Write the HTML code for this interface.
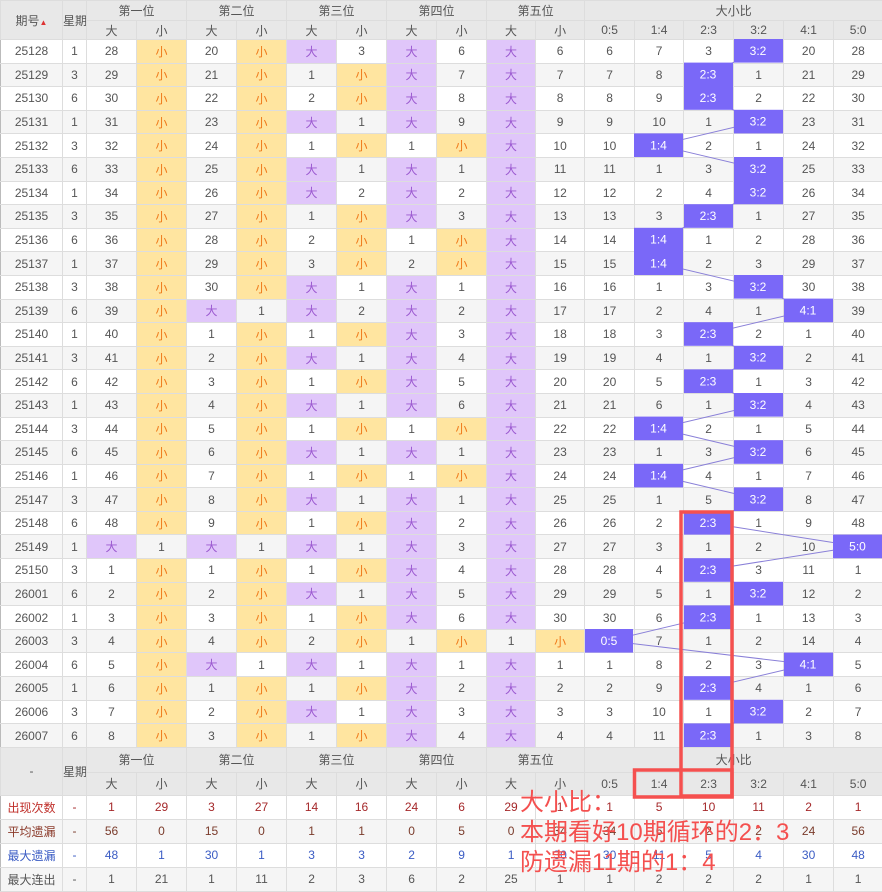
<!DOCTYPE html>
<html><head><meta charset="utf-8"><style>
body{margin:0;width:882px;height:891px;overflow:hidden;background:#fff;font-family:"Liberation Sans","Noto Sans CJK SC",sans-serif;}
.wrap{position:relative;width:882px;height:891px;}
table{border-collapse:collapse;table-layout:fixed;width:882px;font-size:12px;color:#555;position:absolute;left:0;top:0;}
td,th{border:1px solid #ddd;text-align:center;padding:0;white-space:nowrap;overflow:hidden;font-weight:normal;}
th{background:#e8e8e8;color:#555;}
tr.d{height:23.6px;}
tr.d:nth-child(even) td{background:#f5f5f5;}
tr.d td:nth-child(1),tr.d td:nth-child(2),tr.d td:nth-child(3),tr.d td:nth-child(5),tr.d td:nth-child(7),tr.d td:nth-child(9),tr.d td:nth-child(11),tr.d td:nth-child(13){border-left:1px solid #bbb;}
tr.g td{border-top:1px solid #aaa;}
tr.d td.y{background:#ffe5a0 !important;color:#f07a1a;}
tr.d td.p{background:#e0c6fa !important;color:#9b59d0;}
tr.h1{height:20px;} tr.h2{height:19px;}
tr.f1{height:25px;} tr.f2{height:23px;}
tr.s{height:24px;}
tr.s:nth-child(even) td{background:#f5f5f5;}
tr.s td:nth-child(1),tr.s td:nth-child(2),tr.s td:nth-child(3),tr.s td:nth-child(5),tr.s td:nth-child(7),tr.s td:nth-child(9),tr.s td:nth-child(11),tr.s td:nth-child(13){border-left:1px solid #bbb;}
.r1 td{color:#a5282a;} .r2 td{color:#7a3b2b;} .r3 td{color:#3b5cc4;} .r4 td{color:#555;}
.r1 td:first-child{color:#c0302b;} .r2 td:first-child{color:#8b3a2a;}
.note{position:absolute;left:520px;top:788px;color:#f4504f;font-size:24px;line-height:30px;font-family:"Liberation Sans","Noto Sans CJK SC",sans-serif;}
svg{position:absolute;left:0;top:0;}
.up{font-size:8px;color:#d33;}
</style></head><body><div class="wrap">
<table>
<colgroup><col style="width:62px"><col style="width:24px">
<col style="width:50px"><col style="width:50px"><col style="width:50px"><col style="width:50px"><col style="width:50px"><col style="width:50px"><col style="width:50px"><col style="width:50px"><col style="width:49px"><col style="width:49px">
<col style="width:50px"><col style="width:49px"><col style="width:50px"><col style="width:50px"><col style="width:50px"><col style="width:49px"></colgroup>
<tr class="h1"><th rowspan="2">期号<span class="up">▲</span></th><th rowspan="2">星期</th><th colspan="2">第一位</th><th colspan="2">第二位</th><th colspan="2">第三位</th><th colspan="2">第四位</th><th colspan="2">第五位</th><th colspan="6">大小比</th></tr>
<tr class="h2"><th>大</th><th>小</th><th>大</th><th>小</th><th>大</th><th>小</th><th>大</th><th>小</th><th>大</th><th>小</th><th>0:5</th><th>1:4</th><th>2:3</th><th>3:2</th><th>4:1</th><th>5:0</th></tr>
<tr class="d"><td>25128</td><td>1</td><td>28</td><td class="y">小</td><td>20</td><td class="y">小</td><td class="p">大</td><td>3</td><td class="p">大</td><td>6</td><td class="p">大</td><td>6</td><td>6</td><td>7</td><td>3</td><td>3:2</td><td>20</td><td>28</td></tr>
<tr class="d"><td>25129</td><td>3</td><td>29</td><td class="y">小</td><td>21</td><td class="y">小</td><td>1</td><td class="y">小</td><td class="p">大</td><td>7</td><td class="p">大</td><td>7</td><td>7</td><td>8</td><td>2:3</td><td>1</td><td>21</td><td>29</td></tr>
<tr class="d"><td>25130</td><td>6</td><td>30</td><td class="y">小</td><td>22</td><td class="y">小</td><td>2</td><td class="y">小</td><td class="p">大</td><td>8</td><td class="p">大</td><td>8</td><td>8</td><td>9</td><td>2:3</td><td>2</td><td>22</td><td>30</td></tr>
<tr class="d"><td>25131</td><td>1</td><td>31</td><td class="y">小</td><td>23</td><td class="y">小</td><td class="p">大</td><td>1</td><td class="p">大</td><td>9</td><td class="p">大</td><td>9</td><td>9</td><td>10</td><td>1</td><td>3:2</td><td>23</td><td>31</td></tr>
<tr class="d"><td>25132</td><td>3</td><td>32</td><td class="y">小</td><td>24</td><td class="y">小</td><td>1</td><td class="y">小</td><td>1</td><td class="y">小</td><td class="p">大</td><td>10</td><td>10</td><td>1:4</td><td>2</td><td>1</td><td>24</td><td>32</td></tr>
<tr class="d g"><td>25133</td><td>6</td><td>33</td><td class="y">小</td><td>25</td><td class="y">小</td><td class="p">大</td><td>1</td><td class="p">大</td><td>1</td><td class="p">大</td><td>11</td><td>11</td><td>1</td><td>3</td><td>3:2</td><td>25</td><td>33</td></tr>
<tr class="d"><td>25134</td><td>1</td><td>34</td><td class="y">小</td><td>26</td><td class="y">小</td><td class="p">大</td><td>2</td><td class="p">大</td><td>2</td><td class="p">大</td><td>12</td><td>12</td><td>2</td><td>4</td><td>3:2</td><td>26</td><td>34</td></tr>
<tr class="d"><td>25135</td><td>3</td><td>35</td><td class="y">小</td><td>27</td><td class="y">小</td><td>1</td><td class="y">小</td><td class="p">大</td><td>3</td><td class="p">大</td><td>13</td><td>13</td><td>3</td><td>2:3</td><td>1</td><td>27</td><td>35</td></tr>
<tr class="d"><td>25136</td><td>6</td><td>36</td><td class="y">小</td><td>28</td><td class="y">小</td><td>2</td><td class="y">小</td><td>1</td><td class="y">小</td><td class="p">大</td><td>14</td><td>14</td><td>1:4</td><td>1</td><td>2</td><td>28</td><td>36</td></tr>
<tr class="d"><td>25137</td><td>1</td><td>37</td><td class="y">小</td><td>29</td><td class="y">小</td><td>3</td><td class="y">小</td><td>2</td><td class="y">小</td><td class="p">大</td><td>15</td><td>15</td><td>1:4</td><td>2</td><td>3</td><td>29</td><td>37</td></tr>
<tr class="d g"><td>25138</td><td>3</td><td>38</td><td class="y">小</td><td>30</td><td class="y">小</td><td class="p">大</td><td>1</td><td class="p">大</td><td>1</td><td class="p">大</td><td>16</td><td>16</td><td>1</td><td>3</td><td>3:2</td><td>30</td><td>38</td></tr>
<tr class="d"><td>25139</td><td>6</td><td>39</td><td class="y">小</td><td class="p">大</td><td>1</td><td class="p">大</td><td>2</td><td class="p">大</td><td>2</td><td class="p">大</td><td>17</td><td>17</td><td>2</td><td>4</td><td>1</td><td>4:1</td><td>39</td></tr>
<tr class="d"><td>25140</td><td>1</td><td>40</td><td class="y">小</td><td>1</td><td class="y">小</td><td>1</td><td class="y">小</td><td class="p">大</td><td>3</td><td class="p">大</td><td>18</td><td>18</td><td>3</td><td>2:3</td><td>2</td><td>1</td><td>40</td></tr>
<tr class="d"><td>25141</td><td>3</td><td>41</td><td class="y">小</td><td>2</td><td class="y">小</td><td class="p">大</td><td>1</td><td class="p">大</td><td>4</td><td class="p">大</td><td>19</td><td>19</td><td>4</td><td>1</td><td>3:2</td><td>2</td><td>41</td></tr>
<tr class="d"><td>25142</td><td>6</td><td>42</td><td class="y">小</td><td>3</td><td class="y">小</td><td>1</td><td class="y">小</td><td class="p">大</td><td>5</td><td class="p">大</td><td>20</td><td>20</td><td>5</td><td>2:3</td><td>1</td><td>3</td><td>42</td></tr>
<tr class="d g"><td>25143</td><td>1</td><td>43</td><td class="y">小</td><td>4</td><td class="y">小</td><td class="p">大</td><td>1</td><td class="p">大</td><td>6</td><td class="p">大</td><td>21</td><td>21</td><td>6</td><td>1</td><td>3:2</td><td>4</td><td>43</td></tr>
<tr class="d"><td>25144</td><td>3</td><td>44</td><td class="y">小</td><td>5</td><td class="y">小</td><td>1</td><td class="y">小</td><td>1</td><td class="y">小</td><td class="p">大</td><td>22</td><td>22</td><td>1:4</td><td>2</td><td>1</td><td>5</td><td>44</td></tr>
<tr class="d"><td>25145</td><td>6</td><td>45</td><td class="y">小</td><td>6</td><td class="y">小</td><td class="p">大</td><td>1</td><td class="p">大</td><td>1</td><td class="p">大</td><td>23</td><td>23</td><td>1</td><td>3</td><td>3:2</td><td>6</td><td>45</td></tr>
<tr class="d"><td>25146</td><td>1</td><td>46</td><td class="y">小</td><td>7</td><td class="y">小</td><td>1</td><td class="y">小</td><td>1</td><td class="y">小</td><td class="p">大</td><td>24</td><td>24</td><td>1:4</td><td>4</td><td>1</td><td>7</td><td>46</td></tr>
<tr class="d"><td>25147</td><td>3</td><td>47</td><td class="y">小</td><td>8</td><td class="y">小</td><td class="p">大</td><td>1</td><td class="p">大</td><td>1</td><td class="p">大</td><td>25</td><td>25</td><td>1</td><td>5</td><td>3:2</td><td>8</td><td>47</td></tr>
<tr class="d g"><td>25148</td><td>6</td><td>48</td><td class="y">小</td><td>9</td><td class="y">小</td><td>1</td><td class="y">小</td><td class="p">大</td><td>2</td><td class="p">大</td><td>26</td><td>26</td><td>2</td><td>2:3</td><td>1</td><td>9</td><td>48</td></tr>
<tr class="d"><td>25149</td><td>1</td><td class="p">大</td><td>1</td><td class="p">大</td><td>1</td><td class="p">大</td><td>1</td><td class="p">大</td><td>3</td><td class="p">大</td><td>27</td><td>27</td><td>3</td><td>1</td><td>2</td><td>10</td><td>5:0</td></tr>
<tr class="d"><td>25150</td><td>3</td><td>1</td><td class="y">小</td><td>1</td><td class="y">小</td><td>1</td><td class="y">小</td><td class="p">大</td><td>4</td><td class="p">大</td><td>28</td><td>28</td><td>4</td><td>2:3</td><td>3</td><td>11</td><td>1</td></tr>
<tr class="d"><td>26001</td><td>6</td><td>2</td><td class="y">小</td><td>2</td><td class="y">小</td><td class="p">大</td><td>1</td><td class="p">大</td><td>5</td><td class="p">大</td><td>29</td><td>29</td><td>5</td><td>1</td><td>3:2</td><td>12</td><td>2</td></tr>
<tr class="d"><td>26002</td><td>1</td><td>3</td><td class="y">小</td><td>3</td><td class="y">小</td><td>1</td><td class="y">小</td><td class="p">大</td><td>6</td><td class="p">大</td><td>30</td><td>30</td><td>6</td><td>2:3</td><td>1</td><td>13</td><td>3</td></tr>
<tr class="d g"><td>26003</td><td>3</td><td>4</td><td class="y">小</td><td>4</td><td class="y">小</td><td>2</td><td class="y">小</td><td>1</td><td class="y">小</td><td>1</td><td class="y">小</td><td>0:5</td><td>7</td><td>1</td><td>2</td><td>14</td><td>4</td></tr>
<tr class="d"><td>26004</td><td>6</td><td>5</td><td class="y">小</td><td class="p">大</td><td>1</td><td class="p">大</td><td>1</td><td class="p">大</td><td>1</td><td class="p">大</td><td>1</td><td>1</td><td>8</td><td>2</td><td>3</td><td>4:1</td><td>5</td></tr>
<tr class="d"><td>26005</td><td>1</td><td>6</td><td class="y">小</td><td>1</td><td class="y">小</td><td>1</td><td class="y">小</td><td class="p">大</td><td>2</td><td class="p">大</td><td>2</td><td>2</td><td>9</td><td>2:3</td><td>4</td><td>1</td><td>6</td></tr>
<tr class="d"><td>26006</td><td>3</td><td>7</td><td class="y">小</td><td>2</td><td class="y">小</td><td class="p">大</td><td>1</td><td class="p">大</td><td>3</td><td class="p">大</td><td>3</td><td>3</td><td>10</td><td>1</td><td>3:2</td><td>2</td><td>7</td></tr>
<tr class="d"><td>26007</td><td>6</td><td>8</td><td class="y">小</td><td>3</td><td class="y">小</td><td>1</td><td class="y">小</td><td class="p">大</td><td>4</td><td class="p">大</td><td>4</td><td>4</td><td>11</td><td>2:3</td><td>1</td><td>3</td><td>8</td></tr>
<tr class="f1"><th rowspan="2">-</th><th rowspan="2">星期</th><th colspan="2">第一位</th><th colspan="2">第二位</th><th colspan="2">第三位</th><th colspan="2">第四位</th><th colspan="2">第五位</th><th colspan="6">大小比</th></tr>
<tr class="f2"><th>大</th><th>小</th><th>大</th><th>小</th><th>大</th><th>小</th><th>大</th><th>小</th><th>大</th><th>小</th><th>0:5</th><th>1:4</th><th>2:3</th><th>3:2</th><th>4:1</th><th>5:0</th></tr>
<tr class="s r1"><td>出现次数</td><td>-</td><td>1</td><td>29</td><td>3</td><td>27</td><td>14</td><td>16</td><td>24</td><td>6</td><td>29</td><td>1</td><td>1</td><td>5</td><td>10</td><td>11</td><td>2</td><td>1</td></tr>
<tr class="s r2"><td>平均遗漏</td><td>-</td><td>56</td><td>0</td><td>15</td><td>0</td><td>1</td><td>1</td><td>0</td><td>5</td><td>0</td><td>34</td><td>34</td><td>6</td><td>2</td><td>2</td><td>24</td><td>56</td></tr>
<tr class="s r3"><td>最大遗漏</td><td>-</td><td>48</td><td>1</td><td>30</td><td>1</td><td>3</td><td>3</td><td>2</td><td>9</td><td>1</td><td>30</td><td>30</td><td>11</td><td>5</td><td>4</td><td>30</td><td>48</td></tr>
<tr class="s r4"><td>最大连出</td><td>-</td><td>1</td><td>21</td><td>1</td><td>11</td><td>2</td><td>3</td><td>6</td><td>2</td><td>25</td><td>1</td><td>1</td><td>2</td><td>2</td><td>2</td><td>1</td><td>1</td></tr>
</table>
<svg width="882" height="891" viewBox="0 0 882 891" font-family="Liberation Sans, sans-serif" font-size="12">
<polyline fill="none" stroke="#8a80d8" stroke-width="1" points="758,50.8 708,74.4 708,98 758,121.6 658.5,145.2 758,168.8 758,192.4 708,216 658.5,239.6 658.5,263.2 758,286.8 808,310.4 708,334 758,357.6 708,381.2 758,404.8 658.5,428.4 758,452 658.5,475.6 758,499.2 708,522.8 857.5,546.4 708,570 758,593.6 708,617.2 609,640.8 808,664.4 708,688 758,711.6 708,735.2"/>
<g fill="#7a68f8">
<rect x="734" y="39" width="49" height="23.6"/><rect x="684" y="62.6" width="49" height="47.2"/>
<rect x="734" y="109.8" width="49" height="23.6"/><rect x="634" y="133.4" width="49" height="23.6"/>
<rect x="734" y="157" width="49" height="47.2"/><rect x="684" y="204.2" width="49" height="23.6"/>
<rect x="634" y="227.8" width="49" height="47.2"/><rect x="734" y="275" width="49" height="23.6"/>
<rect x="784" y="298.6" width="49" height="23.6"/><rect x="684" y="322.2" width="49" height="23.6"/>
<rect x="734" y="345.8" width="49" height="23.6"/><rect x="684" y="369.4" width="49" height="23.6"/>
<rect x="734" y="393" width="49" height="23.6"/><rect x="634" y="416.6" width="49" height="23.6"/>
<rect x="734" y="440.2" width="49" height="23.6"/><rect x="634" y="463.8" width="49" height="23.6"/>
<rect x="734" y="487.4" width="49" height="23.6"/><rect x="684" y="511" width="49" height="23.6"/>
<rect x="833" y="534.6" width="49" height="23.6"/><rect x="684" y="558.2" width="49" height="23.6"/>
<rect x="734" y="581.8" width="49" height="23.6"/><rect x="684" y="605.4" width="49" height="23.6"/>
<rect x="585" y="629" width="48" height="23.6"/><rect x="784" y="652.6" width="49" height="23.6"/>
<rect x="684" y="676.2" width="49" height="23.6"/><rect x="734" y="699.8" width="49" height="23.6"/>
<rect x="684" y="723.4" width="49" height="23.6"/>
</g>
<g fill="#fff" text-anchor="middle">
<text x="758" y="55">3:2</text><text x="708" y="78.5">2:3</text><text x="708" y="102">2:3</text><text x="758" y="125.7">3:2</text><text x="658.5" y="149.3">1:4</text><text x="758" y="173">3:2</text><text x="758" y="196.5">3:2</text><text x="708" y="220">2:3</text><text x="658.5" y="243.7">1:4</text><text x="658.5" y="267.3">1:4</text><text x="758" y="291">3:2</text><text x="808" y="314.5">4:1</text><text x="708" y="338">2:3</text><text x="758" y="361.7">3:2</text><text x="708" y="385.3">2:3</text><text x="758" y="409">3:2</text><text x="658.5" y="432.5">1:4</text><text x="758" y="456">3:2</text><text x="658.5" y="479.7">1:4</text><text x="758" y="503.3">3:2</text><text x="708" y="527">2:3</text><text x="857.5" y="550.5">5:0</text><text x="708" y="574">2:3</text><text x="758" y="597.7">3:2</text><text x="708" y="621.3">2:3</text><text x="609" y="645">0:5</text><text x="808" y="668.5">4:1</text><text x="708" y="692">2:3</text><text x="758" y="715.7">3:2</text><text x="708" y="739.3">2:3</text>
</g>
<g fill="none" stroke="#f5504f" stroke-width="3.5">
<rect x="681" y="512" width="51" height="284"/>
<rect x="634.5" y="770" width="97.5" height="27"/>
</g>
</svg>
<div class="note">大小比：<br>本期看好10期循环的2：3<br>防遗漏11期的1：4</div>
</div></body></html>
